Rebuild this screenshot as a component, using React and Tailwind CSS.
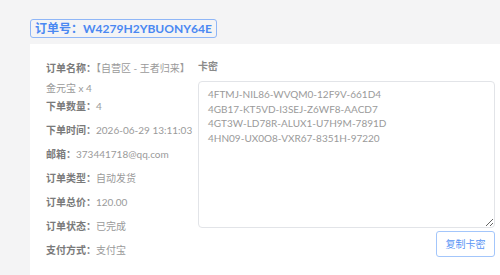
import React from "react";

const keys = [
  "4FTMJ-NIL86-WVQM0-12F9V-661D4",
  "4GB17-KT5VD-I3SEJ-Z6WF8-AACD7",
  "4GT3W-LD78R-ALUX1-U7H9M-7891D",
  "4HN09-UX0O8-VXR67-8351H-97220",
].join("\n");

function Row({ label, value, className = "" }) {
  return (
    <div className={"leading-[18px] whitespace-nowrap " + className}>
      <span className="text-[#7a7a7a] font-semibold">{label}</span>
      <span className="text-[#9a9a9a]">{value}</span>
    </div>
  );
}

export default function App() {
  return (
    <div
      className="w-[500px] h-[275px] overflow-hidden bg-[#f4f4f5] pl-[30px] pt-[19px]"
      style={{ fontFamily: "Lato, 'Noto Sans CJK SC', sans-serif" }}
    >
      <div className="flex">
        <div className="flex items-center h-[19px] px-[4px] border border-[#8fb6f7] rounded-[3px] text-[12px] font-bold text-[#4a88f2] leading-none">
          订单号：W4279H2YBUONY64E
        </div>
      </div>
      <div className="mt-[6px] bg-white h-[240px] flex pt-[13px] pl-[16px] text-[10px]">
        <div className="w-[152px] pt-[2px] flex flex-col">
          <Row label="订单名称：" value="【自营区 - 王者归来】" />
          <div className="leading-[18px] mt-[2px] text-[#9a9a9a] whitespace-nowrap">金元宝 x 4</div>
          <Row label="下单数量：" value="4" />
          <Row label="下单时间：" value="2026-06-29 13:11:03" className="mt-[6px]" />
          <Row label="邮箱：" value="373441718@qq.com" className="mt-[6px]" />
          <Row label="订单类型：" value="自动发货" className="mt-[6px]" />
          <Row label="订单总价：" value="120.00" className="mt-[6px]" />
          <Row label="订单状态：" value="已完成" className="mt-[6px]" />
          <Row label="支付方式：" value="支付宝" className="mt-[6px]" />
        </div>
        <div className="w-[297px] flex flex-col">
          <div className="leading-[18px] text-[#8a8a8a] font-semibold">卡密</div>
          <textarea
            readOnly
            value={keys}
            className="mt-[6px] w-[297px] h-[147px] border border-[#e2e4e8] rounded-[4px] pl-[9px] pt-[5px] text-[10px] leading-[14.7px] text-[#9a9a9a] outline-none"
            style={{ fontFamily: "Lato, sans-serif" }}
          />
          <div className="flex justify-end mt-[3px]">
            <button className="w-[59px] h-[26px] border border-[#a3c6fb] rounded-[3px] text-[10px] text-[#5a95f5] bg-white">
              复制卡密
            </button>
          </div>
        </div>
      </div>
    </div>
  );
}
